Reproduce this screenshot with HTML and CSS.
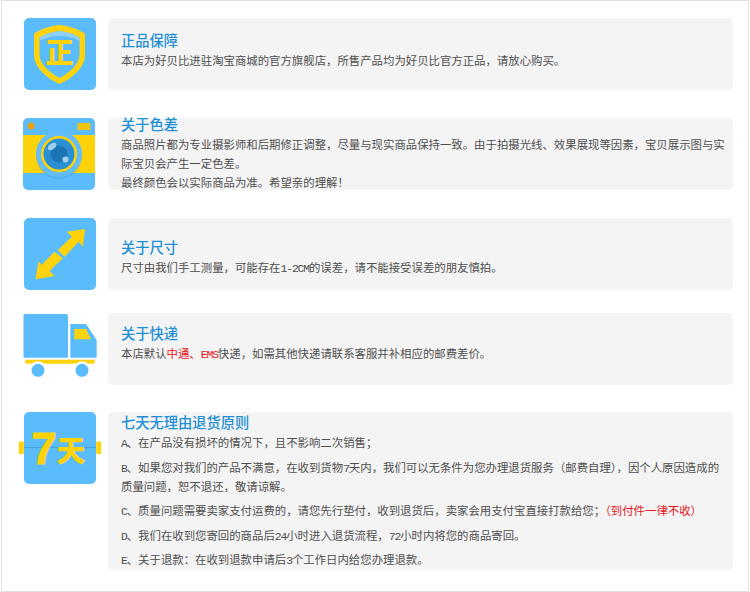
FILE: index.html
```html
<!DOCTYPE html>
<html lang="zh-CN">
<head>
<meta charset="utf-8">
<title>购物须知</title>
<link rel="stylesheet" href="styles.css">
</head>
<body>
<main class="frame">

  <section class="row row-a">
    <svg class="icon" viewBox="0 0 72 72" width="72" height="72" aria-hidden="true">
      <rect width="72" height="72" rx="5" fill="#5bbcfb"/>
      <path d="M35.500 7 C45 8 54 11 61 15.500 V37 C61 49 49 60 35.500 66 C22 60 10 49 10 37 V15.500 C17 11 26 8 35.500 7Z" fill="#fed30b"/>
      <path d="M35.500 13 C43 14 50 16 55.500 19.500 V37 C55.500 46 45 55 35.500 60 C26 55 15.500 46 15.500 37 V19.500 C21 16 28 14 35.500 13Z" fill="#5bbcfb"/>
      <path d="M35.500 13 C43 14 50 16 55.500 19.500 V23 C49 19.500 43 18 35.500 18 C28 18 22 19.500 15.500 23 V19.500 C21 16 28 14 35.500 13Z" fill="#8fd0f8"/>
      <text class="glyph-zheng" x="35.500" y="44.500" text-anchor="middle">正</text>
    </svg>
    <article class="card card-a">
      <h2 class="title">正品保障</h2>
      <p class="line">本店为好贝比进驻淘宝商城的官方旗舰店，所售产品均为好贝比官方正品，请放心购买。</p>
    </article>
  </section>

  <section class="row row-b">
    <svg class="icon icon-camera" viewBox="0 0 72 72" width="72" height="72" aria-hidden="true">
      <rect width="72" height="72" rx="5" fill="#5bbcfb"/>
      <rect y="17" width="72" height="38" fill="#fed30b"/>
      <circle cx="8" cy="8" r="3.500" fill="#e9a112"/>
      <rect x="54.500" y="5" width="13" height="7" fill="#efc40f"/>
      <circle cx="36" cy="38" r="23" fill="#3e9fdc" opacity=".35"/>
      <circle cx="36" cy="36" r="23" fill="#64bdf6"/>
      <circle cx="36" cy="36" r="18" fill="#fed30b"/>
      <circle cx="36" cy="36" r="15.500" fill="#2b90d3"/>
      <circle cx="36" cy="36" r="8.500" fill="#1b74b3"/>
      <ellipse cx="29" cy="28.500" rx="5" ry="3" transform="rotate(-38 29 28.500)" fill="#9fcfee"/>
      <circle cx="42.500" cy="41.500" r="3" fill="#a5d2ee"/>
    </svg>
    <article class="card card-b">
      <h2 class="title">关于色差</h2>
      <p class="line">商品照片都为专业摄影师和后期修正调整，尽量与现实商品保持一致。由于拍摄光线、效果展现等因素，宝贝展示图与实际宝贝会产生一定色差。</p>
      <p class="line">最终颜色会以实际商品为准。希望亲的理解！</p>
    </article>
  </section>

  <section class="row row-c">
    <svg class="icon" viewBox="0 0 72 72" width="72" height="72" aria-hidden="true">
      <rect width="72" height="72" rx="5" fill="#5bbcfb"/>
      <polygon points="61.200,11 42.800,13.700 47.800,18.700 33.800,32 40.500,38.700 54.800,23.700 58.800,28.700" fill="#fed30b"/>
      <polygon points="11.500,61.300 30.500,58 25.500,53 38.800,40.300 30.500,33.700 17.500,47 14.500,43" fill="#fed30b"/>
    </svg>
    <article class="card card-c">
      <h2 class="title">关于尺寸</h2>
      <p class="line">尺寸由我们手工测量，可能存在<span class="lat">1-2CM</span>的误差，请不能接受误差的朋友慎拍。</p>
    </article>
  </section>

  <section class="row row-d">
    <svg class="icon icon-truck" viewBox="0 0 74 72" width="74" height="72" aria-hidden="true">
      <path d="M1.500 1 H43 a2 2 0 0 1 2 2 V44.700 H2 a1.500 1.500 0 0 1 -1.500 -1.500 V2 a1 1 0 0 1 1 -1Z" fill="#5bbcfb"/>
      <path d="M47.300 11 H63 L73.700 27 V43.200 a1.500 1.500 0 0 1 -1.500 1.500 H47.300Z" fill="#5bbcfb"/>
      <polygon points="51.300,16 63,16 68,26.300 51.300,26.300" fill="#fed30b"/>
      <rect x="2" y="46.700" width="70" height="4" rx="2" fill="#fed30b"/>
      <circle cx="15" cy="57.300" r="9" fill="#fff"/>
      <circle cx="59" cy="57.300" r="9" fill="#fff"/>
      <circle cx="15" cy="57.300" r="6.500" fill="#5bbcfb"/>
      <circle cx="59" cy="57.300" r="6.500" fill="#5bbcfb"/>
    </svg>
    <article class="card card-d">
      <h2 class="title">关于快递</h2>
      <p class="line">本店默认<span class="red">中通、<span class="lat">EMS</span></span>快递，如需其他快递请联系客服并补相应的邮费差价。</p>
    </article>
  </section>

  <section class="row row-e">
    <svg class="icon" viewBox="0 0 72 72" width="72" height="72" aria-hidden="true">
      <rect x="-5.200" y="29.500" width="5" height="12.500" rx="1" fill="#fed30b"/>
      <rect x="72.200" y="29.500" width="5" height="12.500" rx="1" fill="#fed30b"/>
      <rect width="72" height="72" rx="5" fill="#5bbcfb"/>
      <rect y="35" width="72" height="1" fill="#43a3e0"/>
      <text class="glyph-seven" x="20" y="52" text-anchor="middle">7</text>
      <text class="glyph-tian" x="47" y="50" text-anchor="middle">天</text>
    </svg>
    <article class="card card-e">
      <h2 class="title">七天无理由退货原则</h2>
      <p class="line para"><span class="lat">A</span>、在产品没有损坏的情况下，且不影响二次销售；</p>
      <p class="line para"><span class="lat">B</span>、如果您对我们的产品不满意，在收到货物<span class="lat">7</span>天内，我们可以无条件为您办理退货服务（邮费自理），因个人原因造成的质量问题，恕不退还，敬请谅解。</p>
      <p class="line para"><span class="lat">C</span>、质量问题需要卖家支付运费的，请您先行垫付，收到退货后，卖家会用支付宝直接打款给您；<span class="red">（到付件一律不收）</span></p>
      <p class="line para"><span class="lat">D</span>、我们在收到您寄回的商品后<span class="lat">24</span>小时进入退货流程，<span class="lat">72</span>小时内将您的商品寄回。</p>
      <p class="line para"><span class="lat">E</span>、关于退款：在收到退款申请后<span class="lat">3</span>个工作日内给您办理退款。</p>
    </article>
  </section>

</main>
</body>
</html>
```

FILE: styles.css
```css
* {
  box-sizing: border-box;
}

html,
body {
  margin: 0;
  padding: 0;
  background: #fff;
}

.frame {
  width: 748px;
  height: 592px;
  margin-left: 1px;
  padding: 17px 15px 0 22px;
  border: 1px solid #e0e0e0;
  border-left-width: 1.500px;
  display: flex;
  flex-direction: column;
  font-family: "Noto Sans CJK SC", "Noto Sans", sans-serif;
  overflow: hidden;
}

.row {
  display: flex;
  align-items: flex-start;
  gap: 12px;
  flex: none;
}

.row-a { height: 72px; margin-bottom: 28px; }
.row-b { height: 71.500px; margin-bottom: 28.500px; }
.row-c { height: 71.500px; margin-bottom: 23.500px; }
.row-d { height: 71.500px; margin-bottom: 27.500px; }
.row-e { height: 158px; }

.icon {
  flex: none;
  display: block;
  overflow: visible;
}

.icon-camera {
  margin-left: -1px;
  margin-right: 1px;
}

.icon-truck {
  margin-left: -1px;
  margin-right: -1px;
}

.card {
  flex: 1;
  height: 100%;
  padding: 0 7px 0 13px;
  background: #f4f4f4;
  border-radius: 5px;
}

.card-a { padding-top: 12px; }
.card-b { padding-top: 0; }
.card-b .title { margin-top: -4.500px; }
.card-c { padding-top: 18.500px; }
.card-d { padding-top: 9.500px; }
.card-e { padding-top: 0; }

.title {
  margin: 0 0 2px;
  font-size: 14.250px;
  line-height: 19px;
  font-weight: 500;
  color: #1d8fd6;
}

.line {
  margin: 0;
  font-size: 11.400px;
  line-height: 19px;
  color: #4f4f4f;
}

.para {
  margin-bottom: 5.500px;
}

.lat {
  font-family: "Liberation Mono", monospace;
  font-size: 11.400px;
  letter-spacing: -1.140px;
  line-height: 0;
}

.red {
  color: #e8141a;
}

.glyph-zheng {
  font-family: "Noto Sans CJK SC", sans-serif;
  font-size: 28px;
  font-weight: 900;
  fill: #fed30b;
}

.glyph-seven {
  font-family: "Liberation Sans", sans-serif;
  font-size: 45px;
  font-weight: 700;
  fill: #fed30b;
  stroke: #fed30b;
  stroke-width: 1.200px;
}

.glyph-tian {
  font-family: "Noto Sans CJK SC", sans-serif;
  font-size: 29px;
  font-weight: 900;
  fill: #fed30b;
}
```
